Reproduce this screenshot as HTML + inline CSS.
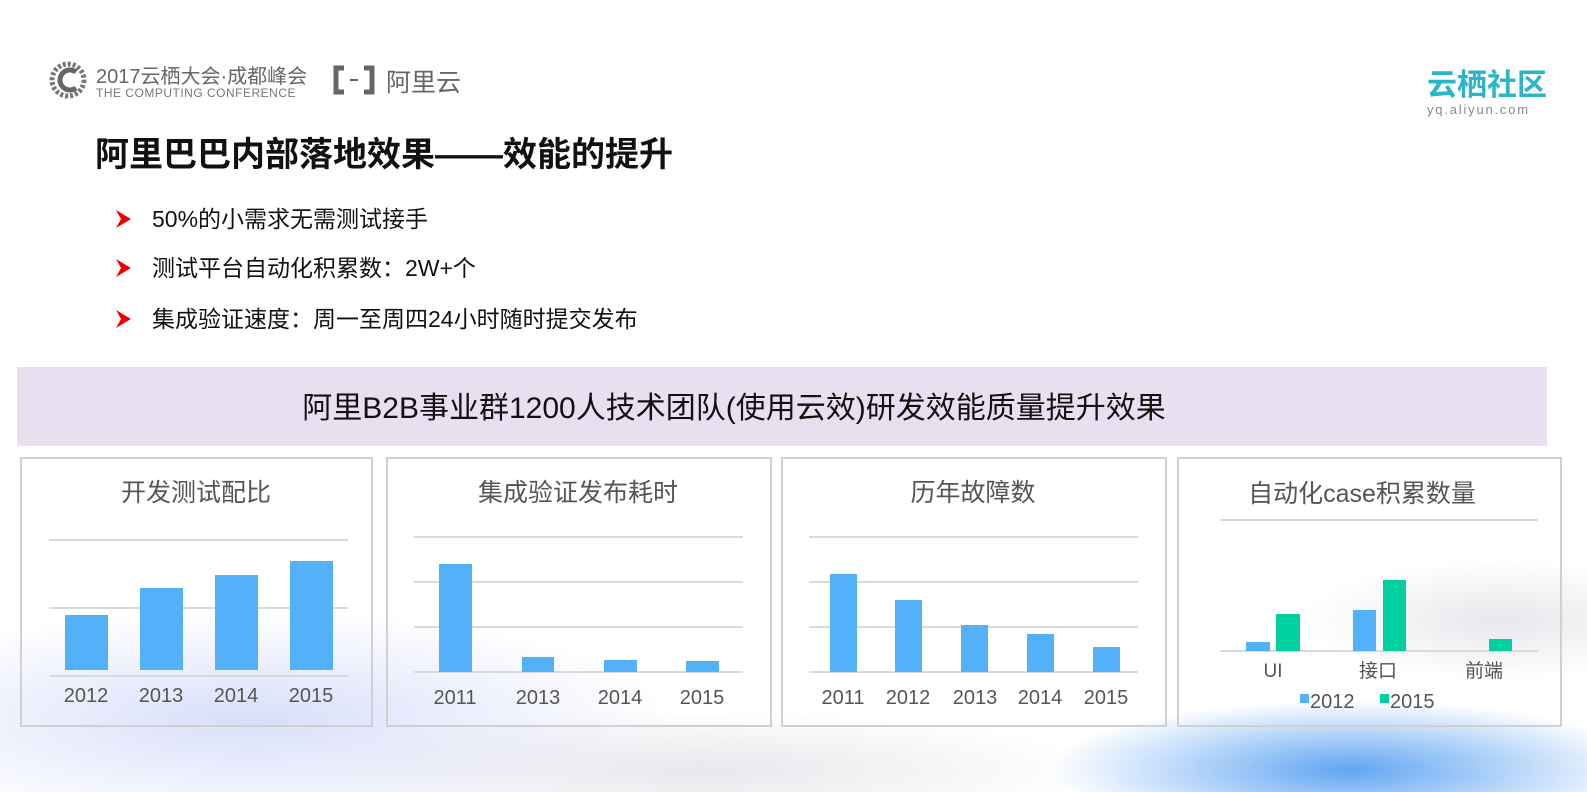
<!DOCTYPE html>
<html><head><meta charset="utf-8"><style>
html,body{margin:0;padding:0;background:#fff;width:1587px;height:792px;overflow:hidden;}
svg{position:absolute;left:0;top:0;display:block}
text{font-family:"Liberation Sans","Noto Sans CJK SC",sans-serif;}
</style></head><body>
<svg width="1587" height="792" viewBox="0 0 1587 792" xmlns="http://www.w3.org/2000/svg">
<defs>
<radialGradient id="g1" cx="0.5" cy="0.5" r="0.5"><stop offset="0" stop-color="#c8d0f8" stop-opacity="0.7"/><stop offset="1" stop-color="#c8d0f8" stop-opacity="0"/></radialGradient>
<radialGradient id="g2" cx="0.5" cy="0.5" r="0.5"><stop offset="0" stop-color="#3a8ff0" stop-opacity="0.8"/><stop offset="1" stop-color="#3a8ff0" stop-opacity="0"/></radialGradient>
<radialGradient id="g3" cx="0.5" cy="0.5" r="0.5"><stop offset="0" stop-color="#d8d8e0" stop-opacity="0.6"/><stop offset="1" stop-color="#d8d8e0" stop-opacity="0"/></radialGradient>
</defs>
<rect width="1587" height="792" fill="#fff"/>
<ellipse cx="250" cy="720" rx="420" ry="110" fill="url(#g1)"/>
<ellipse cx="700" cy="770" rx="400" ry="60" fill="url(#g3)"/>
<ellipse cx="1350" cy="770" rx="300" ry="70" fill="url(#g2)"/>
<ellipse cx="1500" cy="620" rx="200" ry="60" fill="url(#g3)"/>
<circle cx="68" cy="80" r="16" fill="none" stroke="#777" stroke-width="5" stroke-dasharray="3 2"/>
<path d="M76 72 A10 10 0 1 0 76 88" fill="none" stroke="#666" stroke-width="5"/>
<text x="96" y="83" font-size="20" fill="#666">2017云栖大会·成都峰会</text>
<text x="96" y="97" font-size="12" fill="#777" letter-spacing="0.5">THE COMPUTING CONFERENCE</text>
<path d="M344 68 h-8 v24 h8 M364 68 h8 v24 h-8" fill="none" stroke="#666" stroke-width="5"/>
<line x1="350" y1="80" x2="358" y2="80" stroke="#666" stroke-width="2"/>
<text x="386" y="91" font-size="25" fill="#666">阿里云</text>
<text x="1427" y="95" font-size="30" fill="#2bb5c9" font-weight="bold">云栖社区</text>
<text x="1427" y="114" font-size="13" fill="#888" letter-spacing="1.8">yq.aliyun.com</text>
<text x="95" y="166" font-size="34" font-weight="bold" fill="#111">阿里巴巴内部落地效果——效能的提升</text>
<g fill="#e00">
<path d="M116 210 L131 219 L116 228 L121 219 Z"/>
<path d="M116 259 L131 268 L116 277 L121 268 Z"/>
<path d="M116 310 L131 319 L116 328 L121 319 Z"/>
</g>
<g font-size="23" fill="#111">
<text x="152" y="227">50%的小需求无需测试接手</text>
<text x="152" y="276">测试平台自动化积累数：2W+个</text>
<text x="152" y="327">集成验证速度：周一至周四24小时随时提交发布</text>
</g>
<rect x="17" y="367" width="1530" height="79" fill="#e8e0f0"/>
<text x="734" y="418" font-size="30" fill="#111" text-anchor="middle">阿里B2B事业群1200人技术团队(使用云效)研发效能质量提升效果</text>
<g fill="none" stroke="#d0d0d0" stroke-width="2">
<rect x="21" y="458" width="351" height="268"/>
<rect x="387" y="458" width="384" height="268"/>
<rect x="782" y="458" width="384" height="268"/>
<rect x="1178" y="458" width="383" height="268"/>
</g>
<g font-size="25" fill="#555" text-anchor="middle">
<text x="196" y="501">开发测试配比</text>
<text x="578" y="501">集成验证发布耗时</text>
<text x="973" y="501">历年故障数</text>
<text x="1362" y="502">自动化case积累数量</text>
</g>
<g stroke="#d9d9d9" stroke-width="2">
<line x1="49" y1="540" x2="348" y2="540"/><line x1="49" y1="608" x2="348" y2="608"/><line x1="49" y1="676" x2="348" y2="676"/>
<line x1="414" y1="537" x2="743" y2="537"/><line x1="414" y1="582" x2="743" y2="582"/><line x1="414" y1="627" x2="743" y2="627"/><line x1="414" y1="672" x2="743" y2="672"/>
<line x1="809" y1="537" x2="1138" y2="537"/><line x1="809" y1="582" x2="1138" y2="582"/><line x1="809" y1="627" x2="1138" y2="627"/><line x1="809" y1="672" x2="1138" y2="672"/>
<line x1="1220" y1="520" x2="1538" y2="520"/><line x1="1220" y1="651" x2="1538" y2="651"/>
</g>
<g fill="#53b1f9">
<rect x="65" y="615" width="43" height="55"/><rect x="140" y="588" width="43" height="82"/><rect x="215" y="575" width="43" height="95"/><rect x="290" y="561" width="43" height="109"/>
<rect x="439" y="564" width="33" height="108"/><rect x="522" y="657" width="32" height="15"/><rect x="604" y="660" width="33" height="12"/><rect x="686" y="661" width="33" height="11"/>
<rect x="830" y="574" width="27" height="98"/><rect x="895" y="600" width="27" height="72"/><rect x="961" y="625" width="27" height="47"/><rect x="1027" y="634" width="27" height="38"/><rect x="1093" y="647" width="27" height="25"/>
<rect x="1246" y="642" width="24" height="9"/><rect x="1353" y="610" width="23" height="41"/>
<rect x="1300" y="694" width="9" height="9"/>
</g>
<g fill="#00d0a0">
<rect x="1276" y="614" width="24" height="37"/><rect x="1383" y="580" width="23" height="71"/><rect x="1489" y="639" width="23" height="12"/>
<rect x="1380" y="694" width="9" height="9"/>
</g>
<g font-size="20" fill="#555" text-anchor="middle">
<text x="86" y="702">2012</text><text x="161" y="702">2013</text><text x="236" y="702">2014</text><text x="311" y="702">2015</text>
<text x="455" y="704">2011</text><text x="538" y="704">2013</text><text x="620" y="704">2014</text><text x="702" y="704">2015</text>
<text x="843" y="704">2011</text><text x="908" y="704">2012</text><text x="975" y="704">2013</text><text x="1040" y="704">2014</text><text x="1106" y="704">2015</text>
<text x="1273" y="677" font-size="19">UI</text><text x="1378" y="677" font-size="19">接口</text><text x="1484" y="677" font-size="19">前端</text>
</g>
<g font-size="20" fill="#555">
<text x="1310" y="708">2012</text><text x="1390" y="708">2015</text>
</g>
</svg>
</body></html>
